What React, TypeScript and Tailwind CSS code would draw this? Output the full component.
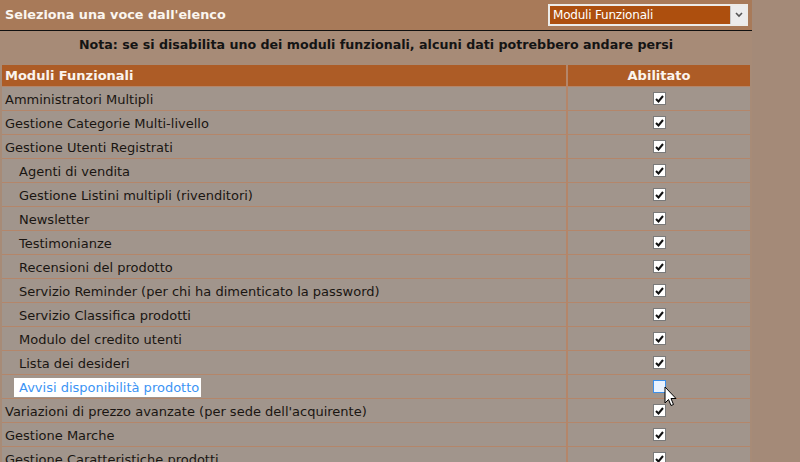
import React from "react";

type Row = { label: string; indent?: boolean; checked: boolean; focus?: boolean };

const rows: Row[] = [
  { label: "Amministratori Multipli", checked: true },
  { label: "Gestione Categorie Multi-livello", checked: true },
  { label: "Gestione Utenti Registrati", checked: true },
  { label: "Agenti di vendita", indent: true, checked: true },
  { label: "Gestione Listini multipli (rivenditori)", indent: true, checked: true },
  { label: "Newsletter", indent: true, checked: true },
  { label: "Testimonianze", indent: true, checked: true },
  { label: "Recensioni del prodotto", indent: true, checked: true },
  { label: "Servizio Reminder (per chi ha dimenticato la password)", indent: true, checked: true },
  { label: "Servizio Classifica prodotti", indent: true, checked: true },
  { label: "Modulo del credito utenti", indent: true, checked: true },
  { label: "Lista dei desideri", indent: true, checked: true },
  { label: "Avvisi disponibilità prodotto", indent: true, checked: false, focus: true },
  { label: "Variazioni di prezzo avanzate (per sede dell'acquirente)", checked: true },
  { label: "Gestione Marche", checked: true },
  { label: "Gestione Caratteristiche prodotti", checked: true },
];

function Check({ checked, focus }: { checked: boolean; focus?: boolean }) {
  if (!checked) {
    return (
      <div className={"w-[13px] h-[13px] border " + (focus ? "border-[#3d8fe8] bg-[#eaf3ff]" : "border-[#777] bg-white")} />
    );
  }
  return (
    <div className="w-[13px] h-[13px] border border-[#7a7a7a] bg-white flex items-center justify-center">
      <svg width="9" height="8" viewBox="0 0 9 8">
        <path d="M1 4 L3.5 6.5 L8 1" stroke="#111" strokeWidth="2" fill="none" />
      </svg>
    </div>
  );
}

export default function App() {
  return (
    <div
      className="w-[800px] h-[462px] overflow-hidden bg-[#a48a78] relative text-[13px] leading-none"
      style={{ fontFamily: '"DejaVu Sans", Verdana, sans-serif' }}
    >
      <div className="w-[752px]">
        <div className="h-[30px] bg-[#a87a59] flex items-center justify-between pl-[5px] pr-[4px]">
          <span className="font-bold text-[#fbf6f0] text-[12.8px]">Seleziona una voce dall'elenco</span>
          <div className="w-[200px] h-[22px] border-2 border-[#ecebe8] bg-[#ad4f0e] flex items-center">
            <span className="flex-1 pl-[3px] text-white text-[12px] tracking-[-0.2px]">Moduli Funzionali</span>
            <div className="w-[16px] h-full bg-[#ececec] border-l border-[#c8c8c8] flex items-center justify-center">
              <svg width="8" height="6" viewBox="0 0 8 6">
                <path d="M1 1 L4 4 L7 1" stroke="#555" strokeWidth="1.6" fill="none" />
              </svg>
            </div>
          </div>
        </div>
        <div className="h-px bg-[#111]" />
        <div className="h-[27px] flex items-center justify-center bg-[#a78b77]">
          <span className="font-bold text-[#141414] text-[12.65px] pt-[2px]">
            Nota: se si disabilita uno dei moduli funzionali, alcuni dati potrebbero andare persi
          </span>
        </div>
        <div className="h-[7px] bg-[#a78b77]" />
        <div className="pl-[2px] pr-[2px] bg-[#a78b77]">
          <div className="grid grid-cols-[564px_182px] gap-x-[2px] gap-y-px bg-[#b4866a]">
            <div className="h-[21px] bg-[#ad5c26] flex items-center pl-[3px] font-bold text-[#fbf4ee]">
              Moduli Funzionali
            </div>
            <div className="h-[21px] bg-[#ad5c26] flex items-center justify-center font-bold text-[#fbf4ee]">
              Abilitato
            </div>
            {rows.map((r, i) => (
              <React.Fragment key={i}>
                <div className={"h-[23px] bg-[#a1958c] flex items-center pt-px " + (r.indent ? "pl-[17px]" : "pl-[3px]")}>
                  {r.focus ? (
                    <span className="bg-white text-[#3c94f4] pl-[5px] pr-[2px] -ml-[5px] py-[3px]">{r.label}</span>
                  ) : (
                    <span className="text-[#1a1512]">{r.label}</span>
                  )}
                </div>
                <div className="h-[23px] bg-[#a1958c] flex items-center justify-center">
                  <Check checked={r.checked} focus={r.focus} />
                </div>
              </React.Fragment>
            ))}
          </div>
        </div>
      </div>
      <svg className="absolute left-[664px] top-[386px]" width="14" height="23" viewBox="0 0 14 23">
        <path d="M1 1 L1 17 L4.5 13.5 L7 19.5 L9.5 18.5 L7 12.5 L12 12.5 Z" fill="#fff" stroke="#000" strokeWidth="1" strokeLinejoin="round" />
      </svg>
    </div>
  );
}
